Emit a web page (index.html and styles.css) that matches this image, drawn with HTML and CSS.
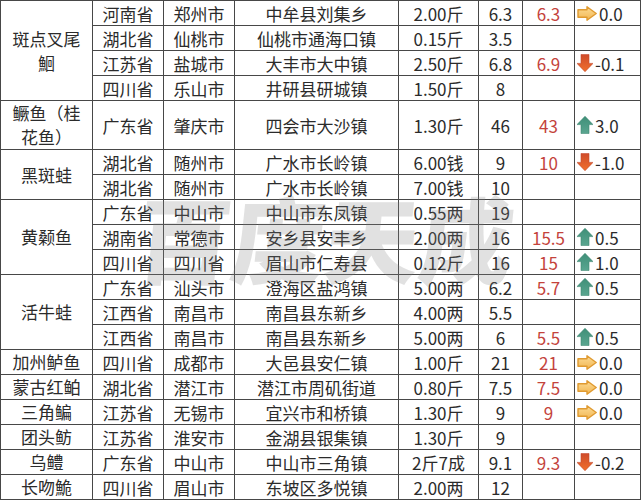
FILE: index.html
```html
<!DOCTYPE html>
<html lang="zh">
<head>
<meta charset="utf-8">
<title>水产价格表</title>
<link rel="stylesheet" href="styles.css">
</head>
<body>
<svg class="defs" width="0" height="0" aria-hidden="true">
  <defs>
    <linearGradient id="gy" x1="0" y1="0" x2="0" y2="1">
      <stop offset="0" stop-color="#fcdc96"/>
      <stop offset="1" stop-color="#f2b652"/>
    </linearGradient>
    <linearGradient id="gd" x1="0" y1="0" x2="0" y2="1">
      <stop offset="0" stop-color="#cf4b2b"/>
      <stop offset="1" stop-color="#f0702c"/>
    </linearGradient>
    <linearGradient id="gu" x1="0" y1="0" x2="0" y2="1">
      <stop offset="0" stop-color="#3f8f78"/>
      <stop offset="1" stop-color="#5aa690"/>
    </linearGradient>
    <symbol id="ar" viewBox="0 0 20 15">
      <path d="M1 3.8 H10 V0.8 L19.2 7.5 L10 14.2 V11.2 H1 Z" fill="url(#gy)" stroke="#e09a30" stroke-width="1.4" stroke-linejoin="round"/>
    </symbol>
    <symbol id="au" viewBox="0 0 16 18">
      <path d="M8 0.3 L16 8.6 H12 V17.6 H4 V8.6 H0 Z" fill="url(#gu)" stroke="#3c8670" stroke-width="0.6" stroke-linejoin="round"/>
    </symbol>
    <symbol id="ad" viewBox="0 0 16 18">
      <path d="M4 0.4 H12 V9.4 H16 L8 17.7 L0 9.4 H4 Z" fill="url(#gd)" stroke="#c4472a" stroke-width="0.6" stroke-linejoin="round"/>
    </symbol>
  </defs>
</svg>
<div class="sheet">
<table class="grid">
  <colgroup>
    <col class="c1"><col class="c2"><col class="c3"><col class="c4"><col class="c5"><col class="c6"><col class="c7"><col class="c8">
  </colgroup>
  <tbody>
    <tr><td class="fish" rowspan="4">斑点叉尾<br>鮰</td><td>河南省</td><td>郑州市</td><td>中牟县刘集乡</td><td>2.00斤</td><td>6.3</td><td class="red">6.3</td><td class="chg"><div class="cv"><svg class="ico r"><use href="#ar"/></svg><span>0.0</span></div></td></tr>
    <tr><td>湖北省</td><td>仙桃市</td><td>仙桃市通海口镇</td><td>0.15斤</td><td>3.5</td><td class="red"></td><td class="chg"></td></tr>
    <tr><td>江苏省</td><td>盐城市</td><td>大丰市大中镇</td><td>2.50斤</td><td>6.8</td><td class="red">6.9</td><td class="chg"><div class="cv"><svg class="ico v"><use href="#ad"/></svg><span>-0.1</span></div></td></tr>
    <tr><td>四川省</td><td>乐山市</td><td>井研县研城镇</td><td>1.50斤</td><td>8</td><td class="red"></td><td class="chg"></td></tr>
    <tr class="tall"><td class="fish">鳜鱼（桂<br>花鱼）</td><td>广东省</td><td>肇庆市</td><td>四会市大沙镇</td><td>1.30斤</td><td>46</td><td class="red">43</td><td class="chg"><div class="cv"><svg class="ico v"><use href="#au"/></svg><span>3.0</span></div></td></tr>
    <tr><td class="fish" rowspan="2">黑斑蛙</td><td>湖北省</td><td>随州市</td><td>广水市长岭镇</td><td>6.00钱</td><td>9</td><td class="red">10</td><td class="chg"><div class="cv"><svg class="ico v"><use href="#ad"/></svg><span>-1.0</span></div></td></tr>
    <tr><td>湖北省</td><td>随州市</td><td>广水市长岭镇</td><td>7.00钱</td><td>10</td><td class="red"></td><td class="chg"></td></tr>
    <tr><td class="fish" rowspan="3">黄颡鱼</td><td>广东省</td><td>中山市</td><td>中山市东凤镇</td><td>0.55两</td><td>19</td><td class="red"></td><td class="chg"></td></tr>
    <tr><td>湖南省</td><td>常德市</td><td>安乡县安丰乡</td><td>2.00两</td><td>16</td><td class="red">15.5</td><td class="chg"><div class="cv"><svg class="ico v"><use href="#au"/></svg><span>0.5</span></div></td></tr>
    <tr><td>四川省</td><td>四川省</td><td>眉山市仁寿县</td><td>0.12斤</td><td>16</td><td class="red">15</td><td class="chg"><div class="cv"><svg class="ico v"><use href="#au"/></svg><span>1.0</span></div></td></tr>
    <tr><td class="fish" rowspan="3">活牛蛙</td><td>广东省</td><td>汕头市</td><td>澄海区盐鸿镇</td><td>5.00两</td><td>6.2</td><td class="red">5.7</td><td class="chg"><div class="cv"><svg class="ico v"><use href="#au"/></svg><span>0.5</span></div></td></tr>
    <tr><td>江西省</td><td>南昌市</td><td>南昌县东新乡</td><td>4.00两</td><td>5.5</td><td class="red"></td><td class="chg"></td></tr>
    <tr><td>江西省</td><td>南昌市</td><td>南昌县东新乡</td><td>5.00两</td><td>6</td><td class="red">5.5</td><td class="chg"><div class="cv"><svg class="ico v"><use href="#au"/></svg><span>0.5</span></div></td></tr>
    <tr><td class="fish">加州鲈鱼</td><td>四川省</td><td>成都市</td><td>大邑县安仁镇</td><td>1.00斤</td><td>21</td><td class="red">21</td><td class="chg"><div class="cv"><svg class="ico r"><use href="#ar"/></svg><span>0.0</span></div></td></tr>
    <tr><td class="fish">蒙古红鲌</td><td>湖北省</td><td>潜江市</td><td>潜江市周矶街道</td><td>0.80斤</td><td>7.5</td><td class="red">7.5</td><td class="chg"><div class="cv"><svg class="ico r"><use href="#ar"/></svg><span>0.0</span></div></td></tr>
    <tr><td class="fish">三角鳊</td><td>江苏省</td><td>无锡市</td><td>宜兴市和桥镇</td><td>1.30斤</td><td>9</td><td class="red">9</td><td class="chg"><div class="cv"><svg class="ico r"><use href="#ar"/></svg><span>0.0</span></div></td></tr>
    <tr><td class="fish">团头鲂</td><td>江苏省</td><td>淮安市</td><td>金湖县银集镇</td><td>1.30斤</td><td>9</td><td class="red"></td><td class="chg"></td></tr>
    <tr><td class="fish">乌鳢</td><td>广东省</td><td>中山市</td><td>中山市三角镇</td><td>2斤7成</td><td>9.1</td><td class="red">9.3</td><td class="chg"><div class="cv"><svg class="ico v"><use href="#ad"/></svg><span>-0.2</span></div></td></tr>
    <tr><td class="fish">长吻鮠</td><td>四川省</td><td>眉山市</td><td>东坡区多悦镇</td><td>2.00两</td><td>12</td><td class="red"></td><td class="chg"></td></tr>
  </tbody>
</table>
<div class="watermark" aria-hidden="true">百度天成</div>
</div>
</body>
</html>
```

FILE: styles.css
```css
html, body {
  margin: 0;
  padding: 0;
  background: #ffffff;
}

body {
  font-family: "Noto Sans CJK SC", "Noto Sans", sans-serif;
  color: #2b2b2b;
}

.defs {
  position: absolute;
  width: 0;
  height: 0;
  overflow: hidden;
}

.sheet {
  position: relative;
  width: 643px;
  height: 500px;
  overflow: hidden;
}

.grid {
  border-collapse: collapse;
  table-layout: fixed;
  width: 640px;
}

.c1 { width: 92px; }
.c2 { width: 71px; }
.c3 { width: 71px; }
.c4 { width: 164px; }
.c5 { width: 80px; }
.c6 { width: 44px; }
.c7 { width: 52px; }
.c8 { width: 66px; }

.grid td {
  border: 1px solid #474747;
  height: 24px;
  padding: 0;
  text-align: center;
  vertical-align: middle;
  font-size: 17px;
  line-height: 23px;
  white-space: nowrap;
  overflow: hidden;
}

.grid tr.tall td {
  height: 48px;
}

.grid td.fish {
  line-height: 24px;
}

.grid td.red {
  color: #c4433c;
}

.grid td.chg {
  text-align: left;
  padding-left: 2px;
}

.cv {
  display: flex;
  align-items: center;
  gap: 2px;
  height: 23px;
}

.ico {
  display: block;
  flex: none;
}

.ico.r {
  width: 20px;
  height: 15px;
}

.ico.v {
  width: 16px;
  height: 18px;
}

.watermark {
  position: absolute;
  left: 138px;
  top: 176px;
  font-size: 94px;
  font-weight: 900;
  line-height: 120px;
  letter-spacing: 0;
  color: rgba(130, 130, 130, 0.24);
  transform: skewX(-6deg);
  pointer-events: none;
}
```
